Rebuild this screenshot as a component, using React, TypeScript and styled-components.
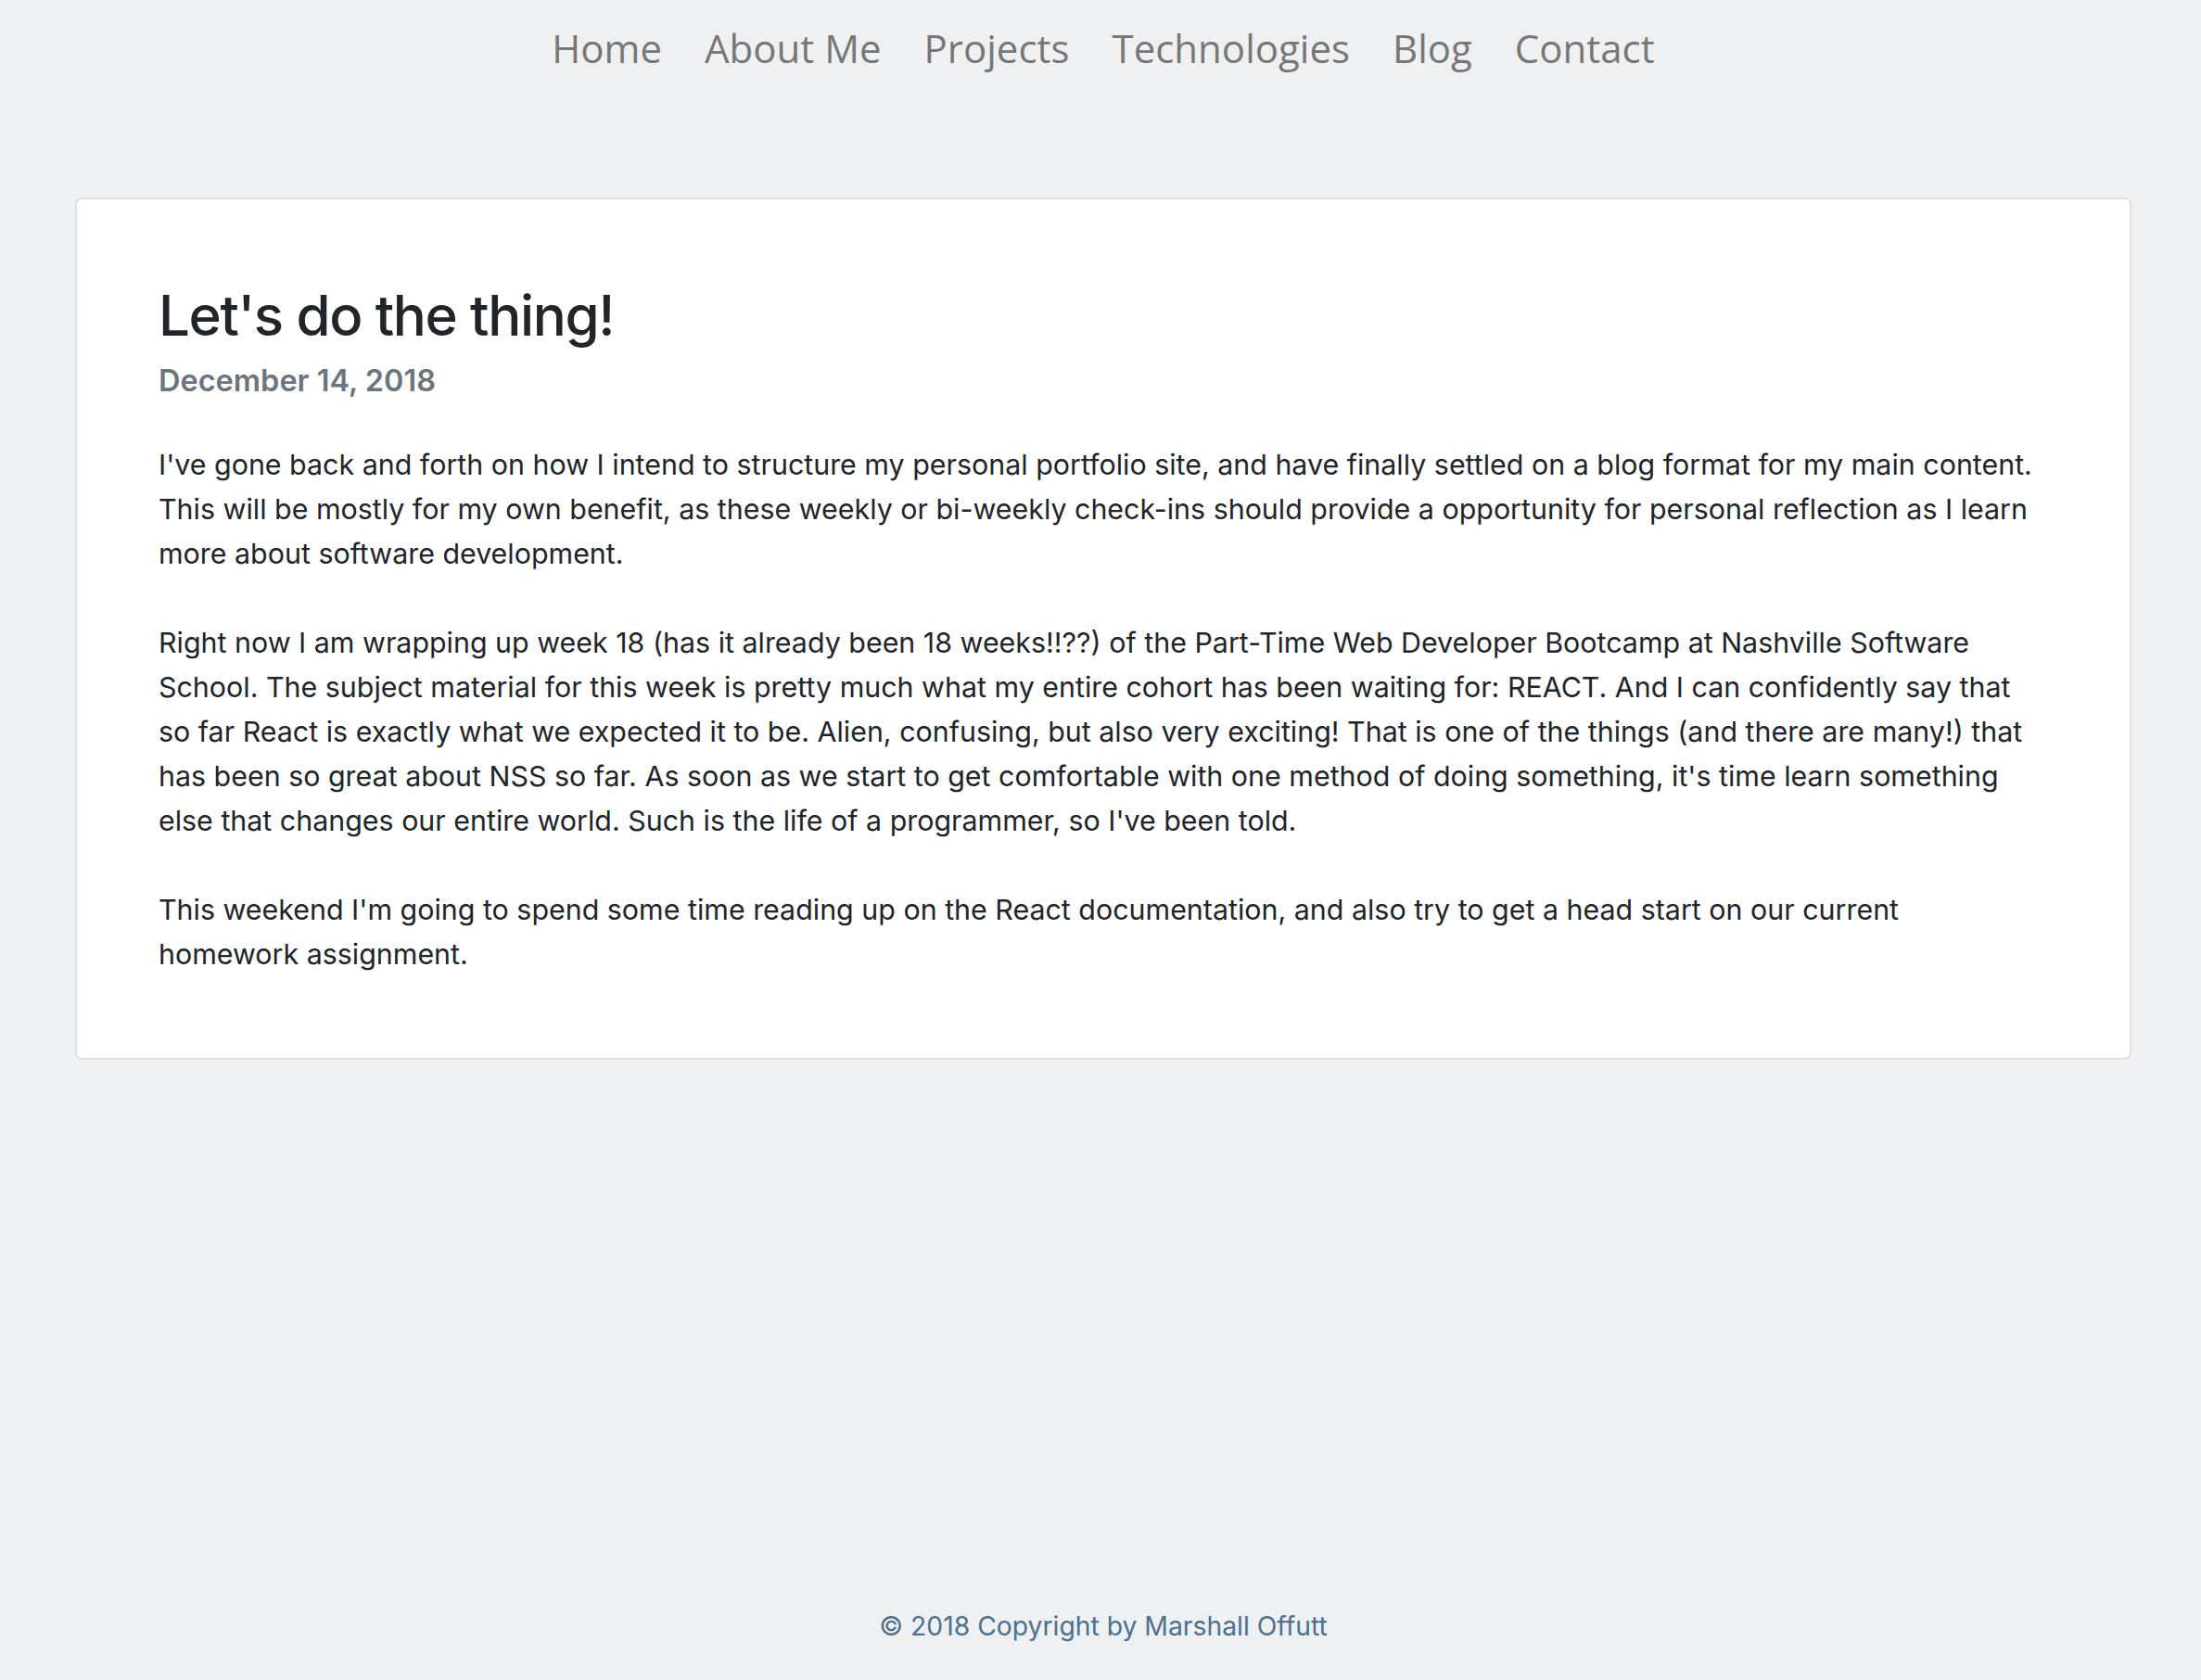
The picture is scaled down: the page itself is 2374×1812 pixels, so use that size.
import React from "react";
import styled, { createGlobalStyle } from "styled-components";

const navLinks = ["Home", "About Me", "Projects", "Technologies", "Blog", "Contact"];

const paragraphs = [
  "I've gone back and forth on how I intend to structure my personal portfolio site, and have finally settled on a blog format for my main content. This will be mostly for my own benefit, as these weekly or bi-weekly check-ins should provide a opportunity for personal reflection as I learn more about software development.",
  "Right now I am wrapping up week 18 (has it already been 18 weeks!!??) of the Part-Time Web Developer Bootcamp at Nashville Software School. The subject material for this week is pretty much what my entire cohort has been waiting for: REACT. And I can confidently say that so far React is exactly what we expected it to be. Alien, confusing, but also very exciting! That is one of the things (and there are many!) that has been so great about NSS so far. As soon as we start to get comfortable with one method of doing something, it's time learn something else that changes our entire world. Such is the life of a programmer, so I've been told.",
  "This weekend I'm going to spend some time reading up on the React documentation, and also try to get a head start on our current homework assignment.",
];

const GlobalStyle = createGlobalStyle`
  html, body {
    margin: 0;
    padding: 0;
    background: #eff0f2;
  }
  * {
    box-sizing: border-box;
  }
`;

export default function App() {
  return (
    <>
      <GlobalStyle />
      <Page>
        <Nav>
          {navLinks.map((link) => (
            <NavLink key={link} href="#">
              {link}
            </NavLink>
          ))}
        </Nav>
        <Main>
          <Card>
            <Title>Let's do the thing!</Title>
            <PostDate>December 14, 2018</PostDate>
            <Body>
              {paragraphs.map((text, i) => (
                <Paragraph key={i}>{text}</Paragraph>
              ))}
            </Body>
          </Card>
        </Main>
        <Footer>© 2018 Copyright by Marshall Offutt</Footer>
      </Page>
    </>
  );
}

const Page = styled.div`
  display: flex;
  flex-direction: column;
  min-height: 100vh;
  font-family: Inter, "Liberation Sans", sans-serif;
`;

const Nav = styled.nav`
  display: flex;
  justify-content: center;
  gap: 46px;
  padding: 20px 0 0 6px;
`;

const NavLink = styled.a`
  font-family: "Open Sans", sans-serif;
  font-size: 42px;
  line-height: 63px;
  color: #777777;
  text-decoration: none;
`;

const Main = styled.main`
  padding: 130px 75px 0 81px;
`;

const Card = styled.article`
  background: #ffffff;
  border: 2px solid #e0e0e0;
  border-radius: 7px;
  padding: 89px 96px 40px 88px;
`;

const Title = styled.h1`
  margin: 0;
  font-size: 60px;
  font-weight: 500;
  line-height: 1.2;
  letter-spacing: -1.35px;
  color: #212529;
`;

const PostDate = styled.h6`
  margin: 15px 0 47px;
  font-size: 32.5px;
  font-weight: 600;
  line-height: 1.2;
  color: #6c757d;
`;

const Body = styled.div`
  font-size: 30.4px;
  line-height: 48px;
  color: #212529;
`;

const Paragraph = styled.p`
  margin: 0 0 48px;
`;

const Footer = styled.footer`
  margin-top: auto;
  padding: 0 0 36px 6px;
  text-align: center;
  font-size: 28.3px;
  line-height: 44px;
  color: #4b7190;
`;
